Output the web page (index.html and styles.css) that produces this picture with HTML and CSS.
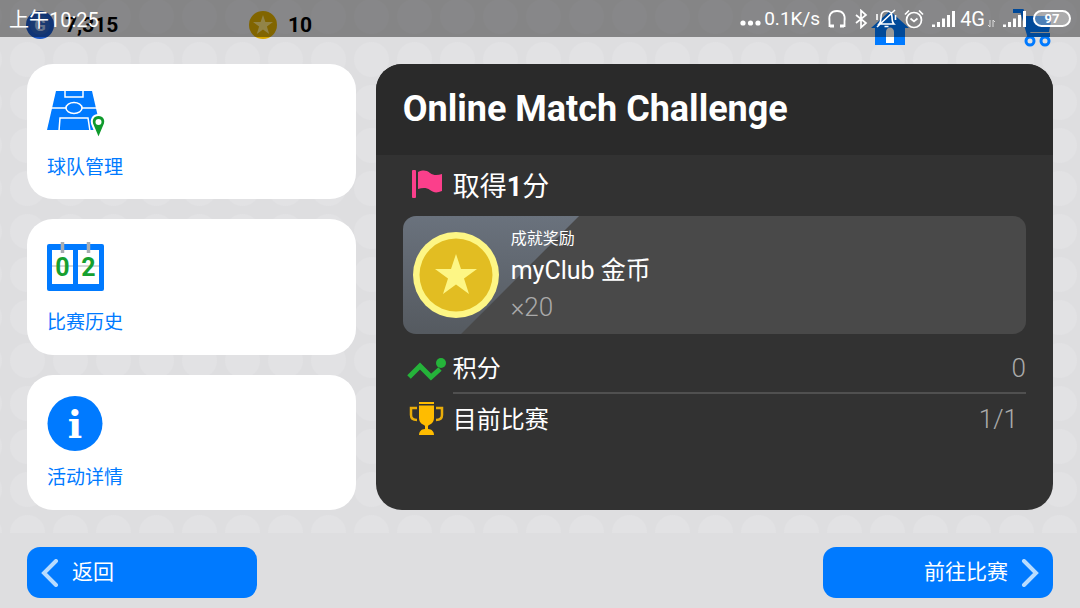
FILE: index.html
```html
<!DOCTYPE html>
<html lang="zh-CN">
<head>
    <meta charset="UTF-8">
    <meta name="viewport" content="width=device-width, initial-scale=1.0">
    <title>Online Match Challenge</title>
    <link rel="stylesheet" href="styles.css">
</head>
<body>
    <!-- Phone status bar, lies over the game -->
    <div class="status-bar">
        <span class="status-time">上午10:25</span>
        <div class="status-icons">
            <svg width="21" height="20" viewBox="0 0 21 20" fill="#fff"><circle cx="3" cy="14" r="2.6"/><circle cx="10.500" cy="14" r="2.6"/><circle cx="18" cy="14" r="2.6"/></svg>
            <span class="status-speed">0.1K/s</span>
            <svg width="20" height="20" viewBox="0 0 20 20" fill="none" stroke="#fff" stroke-width="1.800"><path d="M6 17H2.500V12C1.500 6 4 2 10 2s8.500 4 7.500 10v5H14"/><path d="M3 17h4M13 17h4" stroke-width="3"/></svg>
            <svg width="14" height="20" viewBox="0 0 14 20" fill="none" stroke="#fff" stroke-width="1.700"><path d="M2 6l10 8-5 4.500V1.500L12 6 2 14"/></svg>
            <svg width="22" height="20" viewBox="0 0 22 20" fill="none" stroke="#fff" stroke-width="1.600"><path d="M4 15h15c-2-2-2-4-2-7 0-4-2-6-5.500-6S6 4 6 8c0 3 0 5-2 7zM9.500 17.500h4M2 18L20 1M2 5v6M20.500 6v5"/></svg>
            <svg width="20" height="20" viewBox="0 0 20 20" fill="none" stroke="#fff" stroke-width="1.700"><circle cx="10" cy="11" r="7.500"/><path d="M6.500 9.500L10 12.500l3.500-3M1 5.500L5 1.500M15 1.500l4 4"/></svg>
            <svg width="24" height="20" viewBox="0 0 24 20" fill="#fff"><path d="M1 15.500h3V18H1zM6 13h3v5H6zM11 9.500h3V18h-3zM16 6h3v12h-3zM21 2h3v16h-3z"/></svg>
            <span class="status-net">4G</span>
            <svg class="arrows" width="7" height="20" viewBox="0 0 7 20" fill="none" stroke="#ddd" stroke-width="1"><path d="M2 11v7l-2-2M5 18v-7l2 2"/></svg>
            <svg width="24" height="20" viewBox="0 0 24 20" fill="#fff"><path d="M1 15.500h3V18H1zM6 13h3v5H6zM11 9.500h3V18h-3zM16 6h3v12h-3zM21 2h3v16h-3z"/></svg>
            <span class="battery">97</span>
        </div>
    </div>

    <header class="top-bar">
        <div class="currency">
            <svg width="28" height="28" viewBox="0 0 28 28"><circle cx="14" cy="14" r="14" fill="#1c57c4"/><circle cx="14" cy="14" r="10" fill="#2a60bd"/><text x="14" y="20" text-anchor="middle" class="gp-letter">G</text></svg>
            <span>7,315</span>
        </div>
        <div class="currency">
            <svg width="28" height="28" viewBox="0 0 28 28"><circle cx="14" cy="14" r="14" fill="#d8a800"/><path d="M14 4l2.400 7H24l-6.100 4.500 2.300 7.500-6.200-4.500L7.800 23l2.300-7.500L4 11h7.600z" fill="#f4dc78"/></svg>
            <span>10</span>
        </div>
        <nav class="top-links">
            <a href="#" aria-label="Home">
                <svg width="38" height="36" viewBox="0 0 38 36"><path d="M19 2l19 17h-4v17H4V19H0z" fill="#007aff"/><path d="M15 34V23c0-6 8-6 8 0v11z" fill="#fff"/></svg>
            </a>
            <a href="#" aria-label="Shop">
                <svg width="40" height="38" viewBox="0 0 40 38"><path d="M0 2h9l7 24h21" fill="none" stroke="#007aff" stroke-width="4"/><path d="M11 7h28l-3 16H15z" fill="#007aff"/><circle cx="17" cy="32" r="4" fill="#dedee0" stroke="#007aff" stroke-width="3"/><circle cx="32" cy="32" r="4" fill="#dedee0" stroke="#007aff" stroke-width="3"/></svg>
            </a>
        </nav>
    </header>

    <main class="content">
        <nav class="menu">
            <a class="card" href="#">
                <svg width="60" height="56" viewBox="0 -4 60 56">
                    <path d="M9 1h36l9 39H0z" fill="#007aff"/>
                    <g fill="none" stroke="#fff" stroke-width="1.500"><path d="M4 18h15M35 18h17M18 0v7h18V0M12 41l1-13h28l2 13"/><ellipse cx="27" cy="18" rx="8" ry="5.500"/></g>
                    <path d="M51.500 49L46 36c-3-6 0-11 5.500-11S60 30 57 36z" fill="#0f9a2c" stroke="#fff" stroke-width="2"/>
                    <circle cx="51.500" cy="32" r="3" fill="#fff"/>
                </svg>
                <span>球队管理</span>
            </a>
            <a class="card" href="#">
                <svg width="60" height="56" viewBox="0 6 60 56">
                    <rect y="9" width="57" height="47" rx="2" fill="#007aff"/>
                    <path d="M5 15h21v34H5zM31 15h21v34H31z" fill="#fff"/>
                    <path d="M5 31h21M31 31h21" stroke="#aab0b5"/>
                    <path d="M15.500 7v11M41.500 7v11" stroke="#a8adb2" stroke-width="3.500"/>
                    <text x="15.500" y="41" text-anchor="middle" class="score-digit">0</text>
                    <text x="41.500" y="41" text-anchor="middle" class="score-digit">2</text>
                </svg>
                <span>比赛历史</span>
            </a>
            <a class="card" href="#">
                <svg width="60" height="56" viewBox="0 0 60 56">
                    <circle cx="28" cy="27.500" r="27.500" fill="#007aff"/>
                    <text x="28" y="42" text-anchor="middle" class="info-letter">i</text>
                </svg>
                <span>活动详情</span>
            </a>
        </nav>

        <section class="panel">
            <h1>Online Match Challenge</h1>
            <div class="panel-body">
                <h2 class="goal">
                    <svg width="50" height="30" viewBox="0 0 50 30" fill="#fb3f8b"><rect x="9" y="1" width="4" height="28" rx="1"/><path d="M15 3c5-2 8-2 12 1s8 2 12 1v17c-5 2-8 2-12-1s-8-2-12-1z"/></svg>
                    <span>取得<b>1</b>分</span>
                </h2>
                <div class="reward">
                    <svg width="86" height="86" viewBox="0 0 86 86"><circle cx="43" cy="43" r="43" fill="#fdf685"/><circle cx="43" cy="43" r="36.500" fill="#e2bd22"/><path d="M43 22l5 15h16L51 46.500 56 62 43 52.500 30 62l5-15.500L22 37h16z" fill="#fdf685"/></svg>
                    <div class="reward-text">
                        <p class="reward-type">成就奖励</p>
                        <p class="reward-name">myClub 金币</p>
                        <p class="reward-count">×20</p>
                    </div>
                </div>
                <dl class="stats">
                    <div class="stat">
                        <svg width="50" height="36" viewBox="0 0 50 36"><path d="M6 26l11-11 11 11 9-8" fill="none" stroke="#25b33a" stroke-width="5"/><circle cx="38" cy="12" r="5" fill="#25b33a"/></svg>
                        <div class="stat-line"><dt>积分</dt><dd>0</dd></div>
                    </div>
                    <div class="stat">
                        <svg width="50" height="36" viewBox="0 0 50 36"><path d="M16 1h15v2H16zM16 4.500h15V17c0 6-6 7-6 8v3c4 0 6 3 6 6H16c0-3 2-6 6-6v-3c0-1-6-2-6-8z" fill="#ffbc00"/><path d="M14 7H8v7c0 3 2 5 6 5M33 7h6v7c0 3-2 5-6 5" fill="none" stroke="#e9ad0a" stroke-width="2.500"/></svg>
                        <div class="stat-line"><dt>目前比赛</dt><dd>1/1</dd></div>
                    </div>
                </dl>
            </div>
        </section>
    </main>

    <footer class="actions">
        <button type="button">
            <svg width="18" height="28" viewBox="0 0 18 28"><path d="M15 2L3 14l12 12"/></svg>
            <span>返回</span>
        </button>
        <button type="button" class="next">
            <span>前往比赛</span>
            <svg width="18" height="28" viewBox="0 0 18 28"><path d="M3 2l12 12L3 26"/></svg>
        </button>
    </footer>
</body>
</html>
```

FILE: styles.css
```css
* {
    box-sizing: border-box;
}

body {
    margin: 0;
    min-height: 100vh;
    display: flex;
    flex-direction: column;
    font-family: Roboto, "Noto Sans CJK SC", sans-serif;
    background-color: #dedee0;
    background-image: radial-gradient(circle, #e2e2e4 17px, transparent 18px);
    background-size: 43px 43px;
    background-position: 6px 38px;
}

h1, h2, p, dl, dd {
    margin: 0;
}

svg {
    display: block;
    flex-shrink: 0;
}

a {
    text-decoration: none;
}

/* Status bar */
.status-bar {
    position: absolute;
    top: 0;
    left: 0;
    right: 0;
    z-index: 10;
    height: 37px;
    padding: 0 9px;
    display: flex;
    align-items: center;
    justify-content: space-between;
    background-color: rgba(0, 0, 0, 0.4);
    color: white;
    font-size: 20px;
}

.status-icons {
    display: flex;
    align-items: center;
    gap: 7px;
}

.status-speed {
    margin-left: -4px;
    font-size: 19px;
}

.status-net {
    margin-left: -2px;
}

.arrows {
    margin-left: -4px;
}

.battery {
    width: 38px;
    height: 17px;
    border: 2px solid white;
    border-radius: 9px;
    background-color: rgba(255, 255, 255, 0.3);
    font-size: 13px;
    font-weight: bold;
    line-height: 13px;
    text-align: center;
}

/* Top bar */
.top-bar {
    display: flex;
    align-items: flex-start;
    height: 64px;
    padding: 9px 27px 0 26px;
}

.currency {
    display: flex;
    align-items: center;
    gap: 11px;
    height: 32px;
    flex: 0 0 223px;
    font-size: 21px;
    font-weight: bold;
}

.gp-letter {
    font-size: 17px;
    font-weight: bold;
    fill: #a9bfe6;
}

.top-links {
    display: flex;
    gap: 104px;
    margin-left: auto;
}

/* Content */
.content {
    flex: 1;
    display: grid;
    grid-template-columns: 329fr 678fr;
    gap: 20px;
    padding: 0 27px 23px;
}

.menu {
    display: grid;
    grid-template-rows: repeat(3, 1fr);
    gap: 20px;
}

.card {
    display: flex;
    flex-direction: column;
    justify-content: center;
    gap: 12px;
    padding: 4px 20px 0;
    border-radius: 26px;
    background-color: white;
    color: #007aff;
    font-size: 19px;
    line-height: 28px;
}

.score-digit {
    font-size: 25px;
    font-weight: bold;
    fill: #16a030;
}

.info-letter {
    font-family: "DejaVu Serif", serif;
    font-size: 38px;
    font-weight: bold;
    fill: white;
}

/* Challenge panel */
.panel {
    border-radius: 26px;
    overflow: hidden;
    background-color: #323232;
    color: white;
}

.panel h1 {
    padding: 0 27px;
    background-color: #2a2a2a;
    font-size: 36px;
    line-height: 91px;
}

.panel-body {
    padding: 0 27px;
}

.goal {
    display: flex;
    align-items: center;
    height: 61px;
    padding-bottom: 3px;
    font-size: 27px;
    font-weight: normal;
}

.reward {
    display: flex;
    align-items: center;
    gap: 12px;
    padding: 8px 10px;
    border-radius: 13px;
    background-image:
        linear-gradient(135deg, transparent 124px, #494949 125px),
        linear-gradient(#6a727d, #555a60);
}

.reward-type {
    font-size: 16px;
    line-height: 30px;
}

.reward-name {
    font-size: 25px;
    line-height: 34px;
}

.reward-count {
    color: #aaa;
    font-size: 26px;
    font-weight: 300;
    line-height: 38px;
}

.stats {
    padding-top: 10px;
}

.stat {
    display: flex;
    align-items: center;
}

.stat-line {
    flex: 1;
    display: flex;
    align-items: center;
    justify-content: space-between;
    height: 50px;
    font-size: 24px;
}

.stat:not(:last-child) .stat-line {
    border-bottom: 2px solid #505050;
}

.stat dt {
    padding-bottom: 4px;
}

.stat dd {
    color: #aaa;
    font-size: 26px;
    font-weight: 300;
}

.stat:last-child dd {
    padding-right: 8px;
}

/* Bottom buttons */
.actions {
    display: flex;
    justify-content: space-between;
    padding: 14px 27px 10px;
    background-color: #dedee0;
}

.actions button {
    display: flex;
    align-items: center;
    gap: 13px;
    width: 230px;
    height: 51px;
    padding: 0 14px;
    border: none;
    border-radius: 13px;
    background-color: #007aff;
    color: white;
    font-family: inherit;
    font-size: 21px;
    cursor: pointer;
}

.actions span {
    padding-bottom: 6px;
}

.actions .next {
    justify-content: flex-end;
}

.actions path {
    fill: none;
    stroke: #b8dcff;
    stroke-width: 4;
    stroke-linecap: round;
}
```
